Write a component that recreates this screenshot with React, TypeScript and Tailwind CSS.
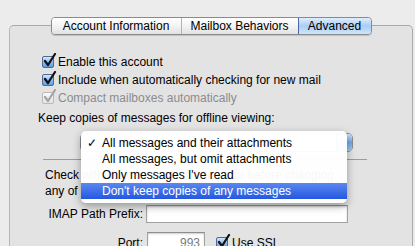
import React from "react";

const CheckBox = ({ disabled = false }: { disabled?: boolean }) => (
  <span className="relative inline-block h-[12px] w-[12px] shrink-0">
    <span
      className={`absolute inset-0 rounded-[2px] border ${
        disabled
          ? "border-[#b9b9b9] bg-gradient-to-b from-[#fafafa] to-[#e4e4e4]"
          : "border-[#4d6a98] bg-gradient-to-b from-[#d3e7fc] via-[#8dbdf0] to-[#5f9ee6]"
      }`}
    />
    <svg
      className="absolute -top-[3px] left-[1px]"
      width="14"
      height="14"
      viewBox="0 0 14 14"
    >
      <path
        d="M2 8 L5 12 L12 1"
        fill="none"
        stroke={disabled ? "#a3a3a3" : "#111"}
        strokeWidth="2.2"
        strokeLinecap="round"
        strokeLinejoin="round"
      />
    </svg>
  </span>
);

const CheckRow = ({
  label,
  disabled = false,
}: {
  label: string;
  disabled?: boolean;
}) => (
  <div className="flex h-[18px] items-center gap-[4px] pl-[32px]">
    <CheckBox disabled={disabled} />
    <span className={disabled ? "text-[#8c8c8c]" : "text-black"}>{label}</span>
  </div>
);

const menuItems = [
  "All messages and their attachments",
  "All messages, but omit attachments",
  "Only messages I've read",
  "Don't keep copies of any messages",
];

export default function App() {
  return (
    <div
      className="h-[246px] w-[415px] overflow-hidden bg-[#ececec] pl-[9px] pt-[25px] text-[12px] leading-[16px] text-black"
      style={{ fontFamily: '"Liberation Sans", Arial, sans-serif' }}
    >
      <div className="h-[260px] w-[404px] rounded-[5px] border border-[#a9a9a9] border-l-[#b8b8b8] bg-[#e3e3e3]">
        {/* tabs */}
        <div className="-mt-[9px] flex justify-center">
          <div className="flex h-[18px] overflow-hidden rounded-[4px] border border-[#8a8a8a] shadow-[0_1px_1px_rgba(0,0,0,0.15)]">
            <div className="flex w-[130px] items-center justify-center border-r border-[#b3b3b3] bg-gradient-to-b from-[#ffffff] via-[#f3f3f3] to-[#e2e2e2]">
              Account Information
            </div>
            <div className="flex w-[116px] items-center justify-center bg-gradient-to-b from-[#ffffff] via-[#f3f3f3] to-[#e2e2e2]">
              Mailbox Behaviors
            </div>
            <div className="flex w-[73px] items-center justify-center border-l border-[#4a68a6] bg-gradient-to-b from-[#e0eefd] via-[#a9cdf5] to-[#cfe6fc]">
              Advanced
            </div>
          </div>
        </div>

        <div className="mt-[18px]">
          <CheckRow label="Enable this account" />
          <CheckRow label="Include when automatically checking for new mail" />
          <CheckRow label="Compact mailboxes automatically" disabled />
        </div>

        <div className="mt-[2px] flex h-[18px] items-center pl-[28px]">
          Keep copies of messages for offline viewing:
        </div>

        {/* popup button with its open menu */}
        <div className="relative ml-[70px] mt-[6px] flex h-[19px] w-[273px] rounded-[5px] border border-[#8c8c8c] bg-gradient-to-b from-white to-[#ececec]">
          <div className="flex-1 pl-[20px] leading-[17px]">
            All messages and their attachments
          </div>
          <div className="w-[16px] rounded-r-[4px] border-l border-[#4a68a6] bg-gradient-to-b from-[#cfe4fb] via-[#6fa8ec] to-[#a5cdf6]" />

          <div className="absolute -top-[3px] left-[0px] z-10 w-[266px] rounded-[5px] bg-white/[0.97] py-[4px] shadow-[0_3px_8px_rgba(0,0,0,0.35)]">
            {menuItems.map((item, i) => (
              <div
                key={item}
                className={`relative flex h-[16px] items-center pl-[21px] ${
                  i === 3
                    ? "bg-gradient-to-b from-[#5b87f0] to-[#2457e0] text-white"
                    : "text-black"
                }`}
              >
                {i === 0 && (
                  <span className="absolute left-[6px] top-0 leading-[16px]">
                    ✓
                  </span>
                )}
                {item}
              </div>
            ))}
          </div>
        </div>

        <div className="ml-[33px] mt-[7px] h-px w-[324px] bg-[#9c9c9c]" />

        <div className="mt-[7px] pl-[35px] leading-[16px]">
          Check with your system administrator before changing
          <br />
          any of the advanced options below:
        </div>

        <div className="mt-[6px] flex items-center">
          <div className="w-[133px] text-right">IMAP Path Prefix:</div>
          <div className="ml-[3px] h-[18px] w-[202px] border border-[#a2a2a2] border-t-[#8e8e8e] bg-white shadow-[inset_0_1px_2px_rgba(0,0,0,0.2)]" />
        </div>

        <div className="mt-[9px] flex items-start">
          <div className="w-[133px] pt-[3px] text-right">Port:</div>
          <div className="ml-[4px] h-[20px] w-[58px] border border-[#a2a2a2] border-t-[#8e8e8e] bg-white pr-[4px] pt-[2px] text-right text-[#7c7c7c] shadow-[inset_0_1px_2px_rgba(0,0,0,0.2)]">
            993
          </div>
          <div className="ml-[11px] flex items-center gap-[4px] pt-[3px]">
            <CheckBox />
            <span>Use SSL</span>
          </div>
        </div>
      </div>
    </div>
  );
}
